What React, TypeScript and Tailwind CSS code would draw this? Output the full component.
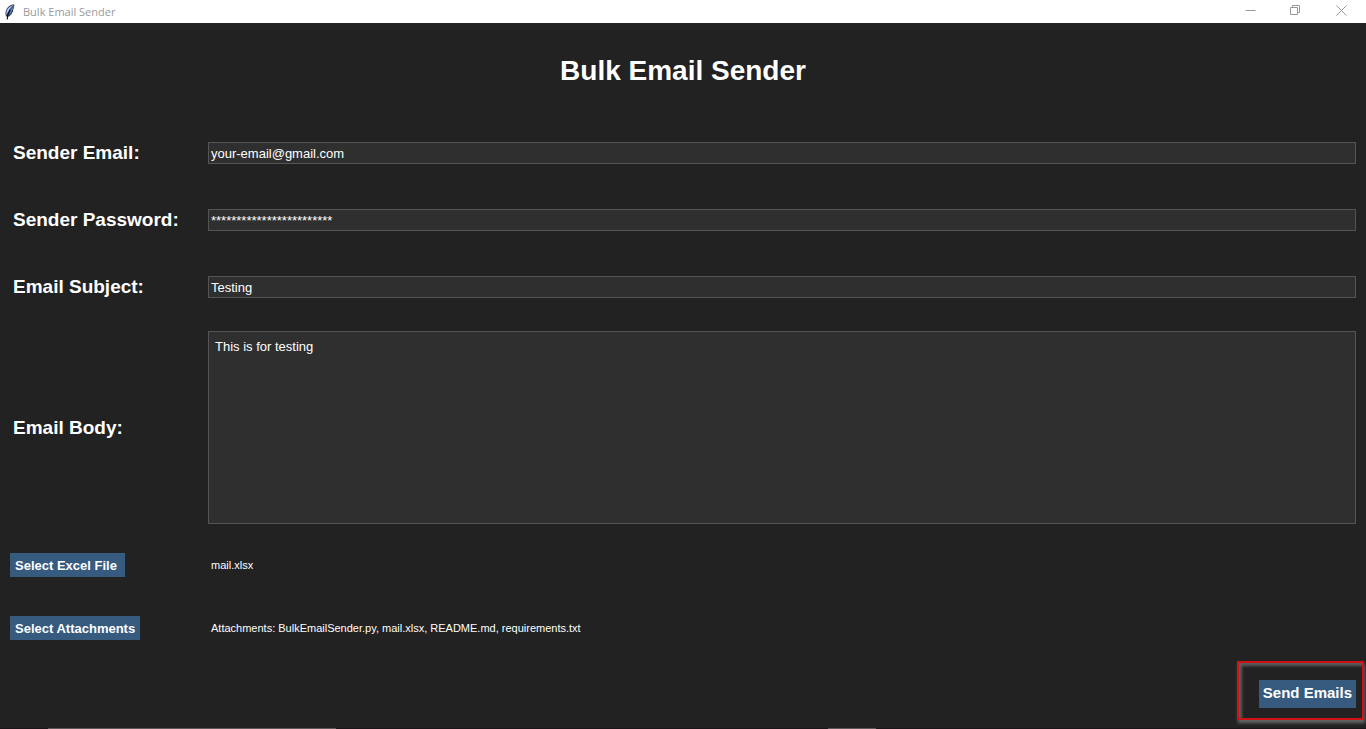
import { useState } from "react";
import type { ReactNode } from "react";

function FeatherIcon() {
  return (
    <svg className="h-4 w-4" viewBox="0 0 16 16" aria-hidden="true">
      <path d="M12.200 .3C8.800 .6 5.400 2.800 4.200 5.800C3.300 8 3.200 10.200 4 12.200L5.500 13C8 12 10 10.400 10.300 8.200L11.300 7.600L11 6.200C12 4.600 12.400 2.500 12.200 .3Z" fill="#2b3a58" />
      <path d="M11.400 1C8.600 1.800 6 3.600 4.900 6C4.200 7.800 4.100 9.500 4.400 11.200C6 7.600 8 4.500 11.400 1Z" fill="#a9c4f0" />
      <path d="M11.700 1.600C9.300 4.500 7.200 7.700 6 11.500C8.300 10.400 9.400 8.800 9.700 7.300C10.900 5.600 11.600 3.900 11.700 1.600Z" fill="#5a80c4" />
      <path d="M8.200 6C6.500 8.800 5.300 11.800 5.200 15.500" stroke="#0b0e14" strokeWidth="1.100" fill="none" />
    </svg>
  );
}

function TitleBar() {
  return (
    <header className="flex h-[23px] shrink-0 items-center bg-white pl-[2px] text-[#999999]">
      <FeatherIcon />
      <span className="ml-[5px] grow font-['Open_Sans',sans-serif] text-[11px] leading-4">Bulk Email Sender</span>
      <div className="flex h-full">
        <button type="button" aria-label="Minimize" className="flex w-[46px] items-start justify-center pt-[5px]">
          <svg className="h-[11px] w-[11px]" viewBox="0 0 11 11" fill="none" stroke="currentColor"><path d="M.5 5.500H10.500" /></svg>
        </button>
        <button type="button" aria-label="Restore" className="flex w-[45px] items-start justify-center pt-[5px]">
          <svg className="h-[11px] w-[11px]" viewBox="0 0 11 11" fill="none" stroke="currentColor"><path d="M.5 2.500H7.500V9.500H.5ZM2.500 2.500V.5H9.500V7.500H7.500" /></svg>
        </button>
        <button type="button" aria-label="Close" className="flex w-12 items-start justify-center pt-[5px] pr-[2px]">
          <svg className="h-[11px] w-[11px]" viewBox="0 0 11 11" fill="none" stroke="currentColor"><path d="M.5 .5L10.500 10.500M10.500 .5L.5 10.500" /></svg>
        </button>
      </div>
    </header>
  );
}

function Row({ label, id, children }: { label: string; id: string; children: ReactNode }) {
  return (
    <>
      <label htmlFor={id} className="pl-[3px] text-[19px] leading-7 font-bold">{label}</label>
      {children}
    </>
  );
}

const fieldClass =
  "block w-full rounded-none border border-[#555555] bg-[#2f2f2f] text-[13px] leading-4 text-white outline-none";
const inputClass = "h-[22px] px-[2px] pt-[2px]";
const buttonClass = "justify-self-start bg-[#375a7f] font-bold text-white hover:bg-[#44698f]";
const pickerClass = "h-6 min-w-[115px] px-[5px] pt-[2px] text-left text-[13px] leading-4";

export default function App() {
  const [email, setEmail] = useState("your-email@gmail.com");
  const [password, setPassword] = useState("*".repeat(24));
  const [subject, setSubject] = useState("Testing");
  const [body, setBody] = useState("This is for testing");

  return (
    <div className="flex min-h-screen flex-col bg-[#222222] font-['Liberation_Sans',Arial,sans-serif] text-white">
      <TitleBar />
      <form className="flex grow flex-col px-[10px]" onSubmit={(e) => e.preventDefault()}>
        <h1 className="pt-[30px] pb-[31px] text-center text-[28px] leading-[35px] font-bold">Bulk Email Sender</h1>
        <div className="grid grid-cols-[198px_1fr] grid-rows-[67px_67px_67px_215px_60px_66px] items-center">
          <Row label="Sender Email:" id="email">
            <input id="email" type="text" className={`${fieldClass} ${inputClass}`} value={email} onChange={(e) => setEmail(e.target.value)} />
          </Row>
          <Row label="Sender Password:" id="password">
            <input id="password" type="text" autoComplete="off" className={`${fieldClass} ${inputClass}`} value={password} onChange={(e) => setPassword(e.target.value)} />
          </Row>
          <Row label="Email Subject:" id="subject">
            <input id="subject" type="text" className={`${fieldClass} ${inputClass}`} value={subject} onChange={(e) => setSubject(e.target.value)} />
          </Row>
          <Row label="Email Body:" id="body">
            <textarea id="body" className={`${fieldClass} h-[193px] resize-none px-[6px] py-[7px]`} value={body} onChange={(e) => setBody(e.target.value)} />
          </Row>
          <button type="button" className={`${buttonClass} ${pickerClass}`}>Select Excel File</button>
          <p className="pl-[3px] text-[11px] leading-4">mail.xlsx</p>
          <button type="button" className={`${buttonClass} ${pickerClass}`}>Select Attachments</button>
          <p className="pl-[3px] text-[11px] leading-4">Attachments: BulkEmailSender.py, mail.xlsx, README.md, requirements.txt</p>
        </div>
        <div className="flex grow items-center justify-end pb-[2px]">
          <div className="relative">
            <button type="submit" className={`${buttonClass} block h-7 px-1 text-[15px]`}>Send Emails</button>
            <div className="pointer-events-none absolute -top-[19px] -right-2 -bottom-3 -left-[22px] border-2 border-[#d01218] shadow-[1px_3px_3px_0px_#666666,inset_3px_3px_3px_#5c5c5c]" />
          </div>
        </div>
      </form>
      <div className="flex h-px shrink-0 bg-[#1b1519]" aria-hidden="true">
        <div className="ml-12 w-72 bg-[#5c5759]" />
        <div className="ml-[492px] w-12 bg-[#5c5759]" />
      </div>
    </div>
  );
}
